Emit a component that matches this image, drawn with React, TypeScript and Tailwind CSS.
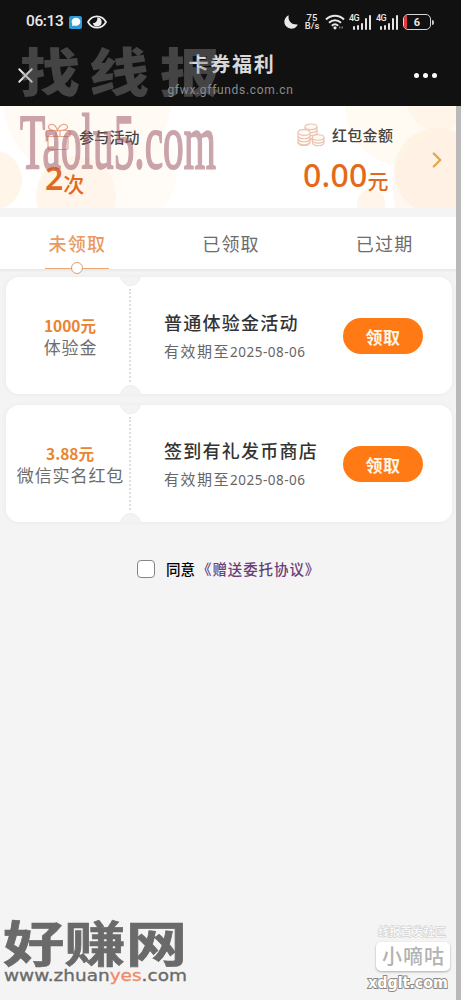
import { useState } from 'react';
import { ChevronRight, X } from 'lucide-react';

type Coupon = {
  amount: string;
  kind: string;
  title: string;
  expires: string;
};

const coupons: Coupon[] = [
  { amount: '1000', kind: '体验金', title: '普通体验金活动', expires: '2025-08-06' },
  { amount: '3.88', kind: '微信实名红包', title: '签到有礼发币商店', expires: '2025-08-06' },
];

const tabs = ['未领取', '已领取', '已过期'];

function Signal() {
  return (
    <div className="relative flex items-end justify-end gap-[2px] h-[15px] w-[22px]">
      <span className="absolute left-0 top-[-1px] text-[9px] leading-[9px] font-medium tracking-[-0.6px]">4G</span>
      <i className="w-[2px] h-[4px] bg-[#e4e4e4] rounded-sm" />
      <i className="w-[2px] h-[5px] bg-[#e4e4e4] rounded-sm" />
      <i className="w-[2px] h-[7px] bg-[#e4e4e4] rounded-sm" />
      <i className="w-[2px] h-[12px] bg-[#e4e4e4] rounded-sm" />
      <i className="w-[2px] h-[15px] bg-[#e4e4e4] rounded-sm" />
    </div>
  );
}

function StatusBar() {
  return (
    <div className="relative h-[44px] pl-[26px] pr-[27px] flex items-center justify-between text-[#e8e8e8]">
      <div className="flex items-center">
        <span className="w-[39px] text-[15.500px] font-medium font-['Roboto'] tracking-[-0.4px] whitespace-nowrap">06:13</span>
        <span className="ml-[4px] w-[13px] h-[13px] rounded-[2px] bg-[#2c9bd8] flex items-center justify-center">
          <svg viewBox="0 0 12 12" className="w-[12px] h-[12px]" fill="#fff">
            <path d="M6 1.800c2.600 0 4.400 1.700 4.400 4s-1.800 4-4.400 4c-.7 0-1.300-.1-1.900-.4L2 10l.4-2.100C1.900 7.300 1.600 6.600 1.600 5.800c0-2.300 1.800-4 4.400-4z" />
          </svg>
        </span>
        <svg viewBox="0 0 20 14" className="ml-[5px] w-[20px] h-[14px]" fill="none" stroke="#ececec" strokeWidth="1.700">
          <path d="M1 7C5 -.6 15 -.6 19 7C15 14.600 5 14.600 1 7Z" />
          <path d="M10.300 2.600a4.400 4.400 0 1 1-4.400 5.300c1.900.8 4.900-1.200 4.400-5.300z" fill="#ececec" stroke="none" />
        </svg>
      </div>
      <div className="flex items-center font-['Roboto']">
        <svg viewBox="0 0 14 15" className="w-[14px] h-[15px]" fill="#e8e8e8">
          <path d="M4.800.2C3.600 5 6.500 10 13.800 9.500A7 7 0 1 1 4.800.2z" />
        </svg>
        <div className="ml-[6px] w-[16px] text-center text-[9.500px] font-medium leading-[8.500px] whitespace-nowrap">
          <div>75</div>
          <div>B/s</div>
        </div>
        <svg viewBox="0 0 20 16" className="ml-[5px] w-[20px] h-[16px]" fill="none" stroke="#e8e8e8" strokeWidth="1.900">
          <path d="M1 5.500C6 .4 14 .4 19 5.500" />
          <path d="M4 8.800c3.500-3.400 8.500-3.400 12 0" />
          <path d="M6.800 11.800c2-1.900 4.400-1.900 6.400 0" />
          <circle cx="10" cy="13.800" r="1.600" fill="#e8e8e8" stroke="none" />
          <path d="M14 13.500h4" stroke="#777" strokeDasharray="1.500 1" />
        </svg>
        <div className="ml-[4px] flex gap-[5px]">
          <Signal />
          <Signal />
        </div>
        <div className="relative ml-[5px] w-[28px] h-[16px] rounded-[5px] border-[1.500px] border-[#d5d5d5] flex items-center justify-center overflow-hidden">
          <i className="absolute left-0 top-0 bottom-0 w-[3px] bg-[#e23b3b]" />
          <span className="text-[11px] font-bold leading-none">6</span>
        </div>
        <i className="w-[2px] h-[5px] ml-[1px] rounded-r bg-[#c8c8c8]" />
      </div>
    </div>
  );
}

function TitleBar() {
  return (
    <div className="relative h-[62px] flex flex-col items-center">
      <X className="absolute left-[13px] top-[19px] w-[25px] h-[25px] text-[#e4e4e4]" strokeWidth={1.8} />
      <h1 className="mt-[8px] pl-[3px] text-[20px] leading-[24px] font-bold tracking-[1.700px] text-[#d9d9d9]">卡券福利</h1>
      <p className="mt-[6px] font-['Roboto'] text-[12px] leading-[16px] tracking-[0.680px] text-[#8c8c8c]">gfwx.gffunds.com.cn</p>
      <div className="absolute right-[24px] top-[29px] flex gap-[4px]">
        <i className="w-[5px] h-[5px] rounded-full bg-white" />
        <i className="w-[5px] h-[5px] rounded-full bg-white" />
        <i className="w-[5px] h-[5px] rounded-full bg-white" />
      </div>
    </div>
  );
}

function GiftIcon() {
  return (
    <svg viewBox="0 0 26 28" className="w-[26px] h-[28px]" fill="none" stroke="#e8a78c" strokeWidth="1.200">
      <rect x="1" y="7.500" width="24" height="6" rx="1" />
      <path d="M3 13.500V25q0 1.500 1.500 1.500h17q1.500 0 1.500-1.500V13.500M11 7.500v6M15 7.500v6" />
      <path d="M12.500 7.500C8 8 3 6.500 3.500 3.500S10-.5 12.500 7.500C15-.5 22 .5 22.500 3.500S18 8 12.500 7.500z" />
    </svg>
  );
}

function CoinsIcon() {
  return (
    <svg viewBox="0 0 28 24" className="w-[28px] h-[24px]" fill="#fffaf6" stroke="#e9c4b1" strokeWidth="1.100">
      <path d="M8 4v13h12V4" />
      <ellipse cx="14" cy="3.800" rx="6" ry="2.800" />
      <path d="M8 7c1 3.500 11 3.500 12 0M8 10c1 3.500 11 3.500 12 0M8 13c1 3.500 11 3.500 12 0" fill="none" />
      <path d="M1 9.500v10c1 4 11 4 12 0v-10" />
      <ellipse cx="7" cy="9.500" rx="6" ry="2.900" />
      <path d="M1 13c1 3.700 11 3.700 12 0M1 16c1 3.700 11 3.700 12 0M1 19c1 3.700 11 3.700 12 0" fill="none" />
      <path d="M15.500 14.500v5.500c1 3.600 10.500 3.600 11.500 0v-5.500" />
      <ellipse cx="21.200" cy="14.500" rx="5.800" ry="2.700" />
      <path d="M15.500 17.500c1 3.500 10.500 3.500 11.500 0" fill="none" />
    </svg>
  );
}

function Summary() {
  return (
    <section className="relative h-[102px] bg-white overflow-hidden flex">
      <svg className="absolute inset-0 w-full h-full" viewBox="0 0 461 102">
        <circle cx="87" cy="-8" r="84" fill="#fffaf3" />
        <circle cx="-8" cy="74" r="30" fill="#fff5e8" />
        <circle cx="125" cy="65" r="52" fill="#fffaf4" opacity="0.6" />
        <circle cx="76" cy="90" r="40" fill="#fff5ea" />
        <circle cx="405" cy="0" r="60" fill="#fffbf2" />
        <circle cx="455" cy="85" r="62" fill="#fff7f1" />
        <circle cx="438" cy="-6" r="31" fill="#fff5e9" />
        <circle cx="437" cy="65" r="43" fill="#fff1e2" opacity="0.85" />
        <circle cx="371" cy="97" r="14" fill="#fff5ea" />
      </svg>
      <div className="relative w-[297px] pl-[45px] pt-[17px]">
        <div className="flex items-center h-[28px]">
          <GiftIcon />
          <span className="ml-[8px] text-[15px] tracking-[0.200px] font-medium text-[#47433f]">参与活动</span>
        </div>
        <div className="mt-[10px] flex items-baseline leading-[34px] text-[#e36a1c]">
          <span className="font-['Noto_Sans'] text-[32px] font-semibold">2</span>
          <span className="pt-[3px] -mb-[3px] relative top-[2px] text-[21px] font-medium">次</span>
        </div>
      </div>
      <div className="relative pt-[15px]">
        <div className="flex items-center h-[28px]">
          <CoinsIcon />
          <span className="ml-[7px] text-[15px] tracking-[0.300px] font-medium text-[#47433f]">红包金额</span>
        </div>
        <div className="mt-[9px] pl-[6px] flex items-baseline leading-[34px] text-[#e36a1c]">
          <span className="font-['Noto_Sans'] text-[32px] font-medium tracking-[0.200px]">0.00</span>
          <span className="relative top-[2px] text-[21px] font-medium">元</span>
        </div>
      </div>
      <ChevronRight className="absolute left-[424px] top-[41px] w-[26px] h-[26px] text-[#e3a64c]" strokeWidth={2.2} />
    </section>
  );
}

function Notch({ className }: { className: string }) {
  return <i className={`absolute left-[114px] w-[21px] h-[21px] rounded-full bg-[#f3f3f3] border border-[#ececec] ${className}`} />;
}

function CouponCard({ coupon }: { coupon: Coupon }) {
  return (
    <article className="relative h-[117px] rounded-[13px] bg-white flex items-center overflow-hidden shadow-[0_0_4px_1px_rgba(0,0,0,0.035)]">
      <Notch className="top-[-12px]" />
      <Notch className="bottom-[-12px]" />
      <i className="absolute left-[123px] top-[12px] bottom-[12px] border-l-2 border-dotted border-[#dedede]" />
      <div className="w-[128px] pt-[2px] shrink-0 text-center whitespace-nowrap">
        <p className="text-[15.500px] leading-[21px] font-bold text-[#ea8430]">{coupon.amount}元</p>
        <p className="pl-px text-[17px] leading-[22px] tracking-[0.900px] text-[#6c6c6c]">{coupon.kind}</p>
      </div>
      <div className="ml-[30px] pt-[2px] w-[179px] shrink-0 whitespace-nowrap">
        <h2 className="text-[18px] leading-[26px] font-medium tracking-[1.250px] text-[#333]">{coupon.title}</h2>
        <p className="mt-[3px] text-[15px] leading-[26px] tracking-[1.500px] text-[#666]">
          有效期至<span className="font-['Noto_Sans'] text-[13.500px] tracking-[0.500px]">{coupon.expires}</span>
        </p>
      </div>
      <button className="w-[80px] h-[36px] pt-[2px] rounded-full bg-[#ff7a14] text-[17px] font-bold tracking-[0.500px] text-[#fff6ea]">领取</button>
    </article>
  );
}

// Site marks sit over the page and never take clicks
function Watermarks() {
  return (
    <svg className="absolute inset-0 w-[461px] h-[1000px] pointer-events-none" viewBox="0 0 461 1000">
      <g transform="translate(0 92) scale(1 0.880)">
        <text x="20 89 160" fontSize="60" fontWeight="900" fontFamily="Noto Sans CJK SC, sans-serif" fill="#8a8a8a" opacity="0.42">找线报</text>
      </g>
      <g transform="translate(20 168) scale(1 1.960)">
        <text fontSize="40" fontFamily="Liberation Serif, serif" fill="#a05c6a" stroke="#a05c6a" strokeWidth="1" opacity="0.55" textLength="196" lengthAdjust="spacingAndGlyphs">Taolu5.com</text>
      </g>
      <g transform="translate(3 962) scale(1 0.820)">
        <text fontSize="60" fontWeight="700" fontFamily="Noto Sans CJK SC, sans-serif" fill="#6a6a6a" stroke="#6a6a6a" strokeWidth="0.800" textLength="184" lengthAdjust="spacingAndGlyphs">好赚网</text>
      </g>
      <text x="4" y="981" fontSize="15" fontFamily="DejaVu Sans, sans-serif" fill="#6a6a6a" stroke="#6a6a6a" strokeWidth="0.300" textLength="183" lengthAdjust="spacingAndGlyphs">
        www.zhuan<tspan fill="#f08a68" stroke="#f08a68">yes</tspan>.com
      </text>
      <text x="378" y="936" fontSize="11.500" fontFamily="Noto Sans CJK SC, sans-serif" fill="#fff" stroke="#d4d4d4" strokeWidth="1.500" paintOrder="stroke" textLength="68">线报首发社区</text>
      <g style={{ filter: 'drop-shadow(0 1px 1px rgba(0,0,0,0.3))' }}>
        <rect x="376" y="942" width="74" height="29" rx="5" fill="#fff" />
      </g>
      <text x="382" y="964" fontSize="20" fontWeight="500" fontFamily="Noto Sans CJK SC, sans-serif" fill="#b2b2b2" textLength="62">小嘀咕</text>
      <text x="368" y="988" fontSize="16" fontWeight="700" fontFamily="DejaVu Sans, sans-serif" fill="#fff" stroke="#888" strokeWidth="2" paintOrder="stroke" textLength="80" lengthAdjust="spacingAndGlyphs">xdglt.com</text>
    </svg>
  );
}

export default function App() {
  const [activeTab, setActiveTab] = useState(0);
  const [agreed, setAgreed] = useState(false);

  return (
    <div className="relative w-[461px] h-[1000px] overflow-hidden bg-[#f4f4f4] font-['Noto_Sans_CJK_SC',sans-serif]">
      <header className="h-[106px] bg-[#111]">
        <StatusBar />
        <TitleBar />
      </header>

      <Summary />

      <nav className="mt-[9px] h-[53px] bg-white grid grid-cols-3 border-b border-[#e9e9e9] shadow-[0_1px_2px_rgba(0,0,0,0.05)]">
        {tabs.map((tab, index) => (
          <button
            key={tab}
            onClick={() => setActiveTab(index)}
            className={`relative pl-px text-[18px] leading-[53px] tracking-[1.200px] ${
              activeTab === index ? 'font-medium text-[#e89a62]' : 'text-[#6c6c6c]'
            }`}
          >
            {tab}
            {activeTab === index && (
              <span className="absolute left-[45px] top-[51px] w-[64px] h-px bg-[#e8a777]">
                <i className="absolute left-[26px] top-[-6px] w-[12px] h-[12px] rounded-full bg-white border border-[#dda071]" />
              </span>
            )}
          </button>
        ))}
      </nav>

      <main className="pt-[7px] pl-[6px] pr-[9px]">
        <div className="flex flex-col gap-[11px]">
          {coupons.map((coupon) => (
            <CouponCard key={coupon.title} coupon={coupon} />
          ))}
        </div>
        <label className="mt-[36px] ml-[131px] flex items-center h-[22px] text-[14.500px] font-medium whitespace-nowrap">
          <input
            type="checkbox"
            checked={agreed}
            onChange={() => setAgreed(!agreed)}
            className="appearance-none w-[18px] h-[18px] rounded-[4px] border border-[#858585] bg-white checked:bg-[#ff7a14]"
          />
          <span className="ml-[11px] text-black">同意</span>
          <span className="ml-[2px] tracking-[0.900px] text-[#6a3d78]">《赠送委托协议》</span>
        </label>
      </main>

      <i className="absolute right-0 top-[106px] bottom-0 w-[5px] bg-[#b9b9b9]" />
      <Watermarks />
    </div>
  );
}
